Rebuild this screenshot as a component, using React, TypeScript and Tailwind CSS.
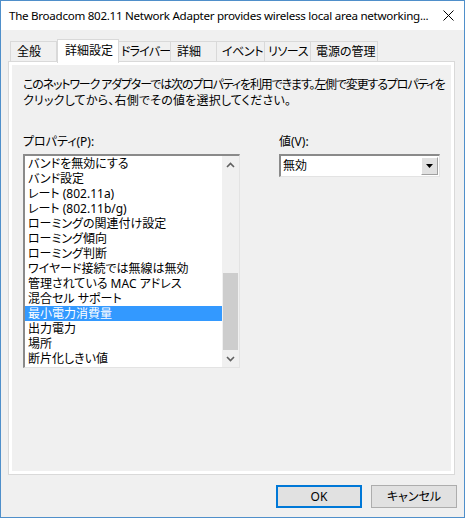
const font = "font-['Noto_Sans','Noto_Sans_CJK_JP',sans-serif] [font-feature-settings:'palt']"

const tabs = [
  { label: '全般', w: 'w-[47px]', pl: 'pl-[6px]' },
  { label: '詳細設定', w: 'w-[62px]', pl: 'pl-[7px]', active: true },
  { label: 'ドライバー', w: 'w-[53px]', pl: 'pl-[2px] tracking-[-0.8px]' },
  { label: '詳細', w: 'w-[47px]', pl: 'pl-[6px]' },
  { label: 'イベント', w: 'w-[49px]', pl: 'pl-[5px] tracking-[-0.4px]' },
  { label: 'リソース', w: 'w-[47px]', pl: 'pl-[3px] tracking-[-0.4px]' },
  { label: '電源の管理', w: 'w-[68px]', pl: 'pl-[5px]' },
]

const items = [
  'バンドを無効にする',
  'バンド設定',
  'レート (802.11a)',
  'レート (802.11b/g)',
  'ローミングの関連付け設定',
  'ローミング傾向',
  'ローミング判断',
  'ワイヤード接続では無線は無効',
  '管理されている MAC アドレス',
  '混合セル サポート',
  '最小電力消費量',
  '出力電力',
  '場所',
  '断片化しきい値',
]

function Chevron({ up }: { up?: boolean }) {
  return (
    <svg width="9" height="6" viewBox="0 0 9 6" className={up ? '' : 'rotate-180'}>
      <path d="M1 5 L4.5 1.5 L8 5" fill="none" stroke="#606060" strokeWidth="1.6" />
    </svg>
  )
}

export default function App() {
  return (
    <div className={`${font} w-[465px] h-[518px] border border-[#4f8fca] bg-[#f0f0f0] flex flex-col text-[12px] text-black`}>
      {/* Title bar */}
      <div className="h-[29px] bg-white flex items-center justify-between pl-[8px] pr-[10px]">
        <span className="text-[11.6px] tracking-[-0.28px] whitespace-nowrap">
          The Broadcom 802.11 Network Adapter provides wireless local area networking...
        </span>
        <svg width="11" height="11" viewBox="0 0 11 11">
          <path d="M0.5 0.5 L10.5 10.5 M10.5 0.5 L0.5 10.5" stroke="#000" strokeWidth="1" />
        </svg>
      </div>

      {/* Tabs */}
      <div className="pt-[9px] pl-[9px] flex items-end h-[31px]">
        {tabs.map((t) => (
          <div
            key={t.label}
            className={
              t.active
                ? `relative z-10 ${t.w} ${t.pl} h-[24px] mb-[-2px] bg-white border border-b-0 border-[#d9d9d9] flex items-center pb-[2px] whitespace-nowrap`
                : `${t.w} ${t.pl} h-[20px] bg-[#f0f0f0] border-t border-l border-r border-[#d9d9d9] -ml-px first:ml-0 flex items-center whitespace-nowrap overflow-visible`
            }
          >
            {t.label}
          </div>
        ))}
      </div>

      {/* Panel */}
      <div className="ml-[7px] w-[447px] h-[414px] border border-[#d9d9d9] bg-white p-[3px]">
        <div className="h-full bg-[#f0f0f0] pl-[11px] pt-[12px]">
          <p className="leading-[16px] whitespace-nowrap">
            <span className="tracking-[-1.15px]">
              このネットワーク アダプターでは次のプロパティを利用できます。左側で変更するプロパティを
            </span>
            <br />
            <span className="tracking-[0.2px]">クリックしてから、右側でその値を選択してください。</span>
          </p>

          <div className="flex mt-[25px]">
            {/* Property list */}
            <div className="w-[217px]">
              <div className="leading-[16px]">プロパティ(P):</div>
              <div className="mt-[4px] h-[214px] border-t-2 border-l-2 border-t-[#8a8a8a] border-l-[#8a8a8a] border-b border-r border-b-[#e3e3e3] border-r-[#e3e3e3] bg-white flex">
                <div className="flex-1">
                  {items.map((it) => (
                    <div
                      key={it}
                      className={`h-[15px] leading-[15px] pl-[3px] whitespace-nowrap ${
                        it === '最小電力消費量' ? 'bg-[#3399ff] text-white' : ''
                      }`}
                    >
                      {it}
                    </div>
                  ))}
                </div>
                <div className="w-[17px] bg-[#f0f0f0] flex flex-col">
                  <div className="h-[17px] flex items-center justify-center">
                    <Chevron up />
                  </div>
                  <div className="flex-1 flex flex-col justify-end">
                    <div className="h-[77px] mx-[1px] bg-[#cdcdcd]" />
                  </div>
                  <div className="h-[17px] flex items-center justify-center">
                    <Chevron />
                  </div>
                </div>
              </div>
            </div>

            {/* Value */}
            <div className="ml-[39px] w-[161px]">
              <div className="leading-[16px]">値(V):</div>
              <div className="mt-[4px] h-[23px] border-t-2 border-l-2 border-t-[#8a8a8a] border-l-[#8a8a8a] border-b border-r border-b-[#e3e3e3] border-r-[#e3e3e3] bg-white flex items-center justify-between">
                <span className="pl-[2px]">無効</span>
                <div className="w-[17px] h-[18px] mr-[1px] bg-[#e1e1e1] border-t border-l border-white border-b border-r border-b-[#a0a0a0] border-r-[#a0a0a0] flex items-center justify-center">
                  <svg width="7" height="4" viewBox="0 0 7 4">
                    <path d="M0 0 H7 L3.5 4 Z" fill="#000" />
                  </svg>
                </div>
              </div>
            </div>
          </div>
        </div>
      </div>

      {/* Buttons */}
      <div className="mt-[10px] flex justify-end gap-[9px] pr-[7px]">
        <button className="w-[86px] h-[23px] bg-[#e1e1e1] border-2 border-[#0078d7] flex items-center justify-center">
          OK
        </button>
        <button className="w-[86px] h-[23px] bg-[#e1e1e1] border border-[#adadad] flex items-center justify-center">
          キャンセル
        </button>
      </div>
    </div>
  )
}
